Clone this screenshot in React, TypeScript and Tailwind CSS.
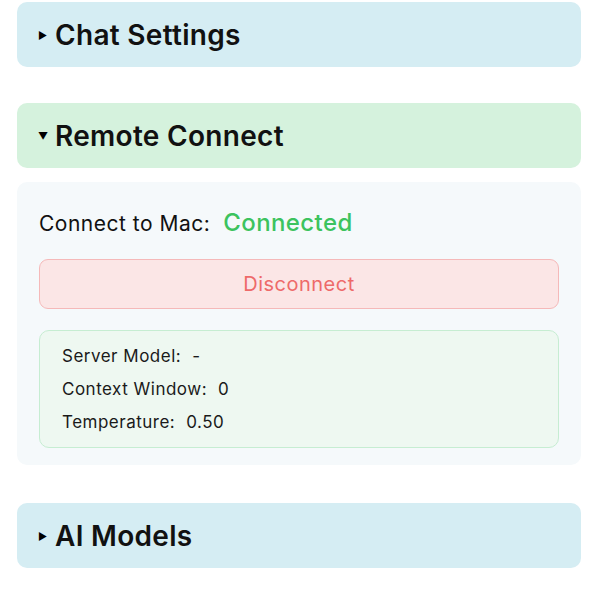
import React from 'react';

const Header: React.FC<{ title: string; open?: boolean; tone: 'blue' | 'green' }> = ({ title, open, tone }) => (
  <div
    className={`h-[65px] rounded-[10px] flex items-center pl-[21px] ${
      tone === 'blue' ? 'bg-[#d5edf3]' : 'bg-[#d5f2dd]'
    }`}
  >
    <span className="w-[10px] text-[10px] leading-none text-black mr-[7px]">{open ? '▼' : '▶'}</span>
    <span className="text-[28px] font-semibold text-[#111] tracking-[0.3px]">{title}</span>
  </div>
);

export default function App() {
  return (
    <div className="bg-white min-h-screen w-[600px] pl-[17px] pr-[19px] pt-[2px] font-['Inter',sans-serif] text-black">
      <Header title="Chat Settings" tone="blue" />

      <div className="mt-[36px]">
        <Header title="Remote Connect" tone="green" open />
        <div className="mt-[14px] bg-[#f5f9fb] rounded-[10px] px-[22px] pt-[23px] pb-[17px]">
          <div className="flex items-baseline gap-[13px]">
            <span className="text-[21px] text-[#111] tracking-[0.5px]">Connect to Mac:</span>
            <span className="text-[24px] font-medium text-[#3cc35e] tracking-[0.4px]">Connected</span>
          </div>

          <button className="mt-[18px] w-full h-[50px] rounded-[9px] bg-[#fbe6e6] border border-[#f5b9b9] text-[20px] tracking-[0.5px] text-[#ee6a6a]">
            Disconnect
          </button>

          <div className="mt-[21px] rounded-[10px] bg-[#eef8f1] border border-[#c6edd2] px-[22px] pt-[15px] pb-[13px] flex flex-col gap-[11px] text-[17px] tracking-[0.5px] text-[#1a1a1a]">
            <div className="flex gap-[11px] h-[22px] items-center">
              <span>Server Model:</span>
              <span>-</span>
            </div>
            <div className="flex gap-[11px] h-[22px] items-center">
              <span>Context Window:</span>
              <span>0</span>
            </div>
            <div className="flex gap-[11px] h-[22px] items-center">
              <span>Temperature:</span>
              <span>0.50</span>
            </div>
          </div>
        </div>
      </div>

      <div className="mt-[38px]">
        <Header title="AI Models" tone="blue" />
      </div>
    </div>
  );
}
